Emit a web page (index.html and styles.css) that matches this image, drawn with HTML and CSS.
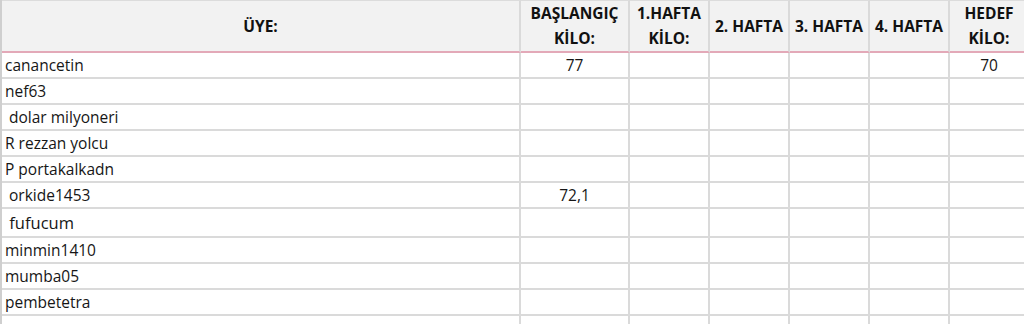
FILE: index.html
```html
<!DOCTYPE html>
<html lang="tr">
<head>
<meta charset="utf-8">
<title>Kilo Takip</title>
<link rel="stylesheet" href="styles.css">
</head>
<body>
<div class="sheet">
  <div class="grid">
    <div class="cell head">ÜYE:</div>
    <div class="cell head">BAŞLANGIÇ<br>KİLO:</div>
    <div class="cell head">1.HAFTA<br>KİLO:</div>
    <div class="cell head">2. HAFTA</div>
    <div class="cell head">3. HAFTA</div>
    <div class="cell head">4. HAFTA</div>
    <div class="cell head">HEDEF<br>KİLO:</div>

    <div class="cell name">canancetin</div><div class="cell num">77</div><div class="cell"></div><div class="cell"></div><div class="cell"></div><div class="cell"></div><div class="cell num">70</div>
    <div class="cell name">nef63</div><div class="cell"></div><div class="cell"></div><div class="cell"></div><div class="cell"></div><div class="cell"></div><div class="cell"></div>
    <div class="cell name"> dolar milyoneri</div><div class="cell"></div><div class="cell"></div><div class="cell"></div><div class="cell"></div><div class="cell"></div><div class="cell"></div>
    <div class="cell name">R rezzan yolcu</div><div class="cell"></div><div class="cell"></div><div class="cell"></div><div class="cell"></div><div class="cell"></div><div class="cell"></div>
    <div class="cell name">P portakalkadn</div><div class="cell"></div><div class="cell"></div><div class="cell"></div><div class="cell"></div><div class="cell"></div><div class="cell"></div>
    <div class="cell name"> orkide1453</div><div class="cell num">72,1</div><div class="cell"></div><div class="cell"></div><div class="cell"></div><div class="cell"></div><div class="cell"></div>
    <div class="cell name big"> fufucum</div><div class="cell"></div><div class="cell"></div><div class="cell"></div><div class="cell"></div><div class="cell"></div><div class="cell"></div>
    <div class="cell name">minmin1410</div><div class="cell"></div><div class="cell"></div><div class="cell"></div><div class="cell"></div><div class="cell"></div><div class="cell"></div>
    <div class="cell name">mumba05</div><div class="cell"></div><div class="cell"></div><div class="cell"></div><div class="cell"></div><div class="cell"></div><div class="cell"></div>
    <div class="cell name">pembetetra</div><div class="cell"></div><div class="cell"></div><div class="cell"></div><div class="cell"></div><div class="cell"></div><div class="cell"></div>
    <div class="cell name"></div><div class="cell"></div><div class="cell"></div><div class="cell"></div><div class="cell"></div><div class="cell"></div><div class="cell"></div>
  </div>
</div>
</body>
</html>
```

FILE: styles.css
```css
html, body {
  margin: 0;
  padding: 0;
  background: #ffffff;
}

.sheet {
  width: 1024px;
  height: 324px;
  overflow: hidden;
  font-family: "Open Sans", "Noto Sans", sans-serif;
  color: #161616;
}

.grid {
  display: grid;
  grid-template-columns: 519px 109px 80px 80px 80px 80px 80px;
  grid-template-rows: 53px 26px 26px 26px 26px 26px 26px 29px 26px 26px 26px 26px;
  width: max-content;
  border-left: 2px solid #cfcfcf;
}

.cell {
  box-sizing: border-box;
  border-right: 2px solid #dadada;
  border-bottom: 2px solid #dadada;
  display: flex;
  align-items: center;
  padding-top: 2px;
  font-size: 15.5px;
  white-space: pre;
  line-height: 1;
}

.head {
  background: #f2f2f2;
  border-top: 1px solid #dcdcdc;
  border-bottom: 2px solid #e3a9b8;
  justify-content: center;
  text-align: center;
  font-weight: 700;
  font-size: 15.5px;
  line-height: 25px;
  padding-top: 0;
  white-space: normal;
  color: #111111;
}

.name {
  padding-left: 3px;
}

.big {
  font-size: 16.5px;
}

.num {
  justify-content: center;
}
```
